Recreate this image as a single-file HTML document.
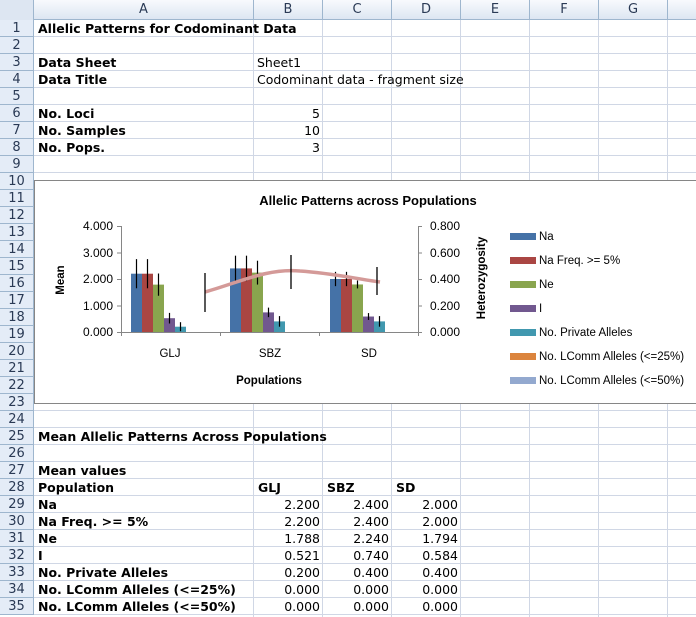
<!DOCTYPE html>
<html><head><meta charset="utf-8"><style>
*{margin:0;padding:0;box-sizing:border-box}
body{width:696px;height:617px;overflow:hidden;background:#fff;position:relative;font-family:"DejaVu Sans",Verdana,sans-serif;font-size:12.5px;color:#000}
.hdr{position:absolute;left:0;top:0;width:696px;height:20px;background:linear-gradient(#f8fafd,#dde6f2);border-bottom:1px solid #9eb6ce}
.ch{position:absolute;top:0;height:20px;line-height:20px;text-align:center;border-right:1px solid #9eb6ce;color:#2a3a55;font-size:13px}
.rh{position:absolute;left:0;width:34px;height:17px;line-height:17px;text-align:center;background:#e4ecf7;border-bottom:1px solid #9eb6ce;border-right:1px solid #9eb6ce;color:#2a3a55;font-size:13px}
.vl{position:absolute;top:20px;width:1px;height:597px;background:#d0d7e5}
.hl{position:absolute;left:34px;width:662px;height:1px;background:#d0d7e5}
.t{position:absolute;height:17px;line-height:17px;white-space:nowrap}
.b{font-weight:bold}
.r{text-align:right}
</style></head><body>
<div class="hdr"></div>
<div class="ch" style="left:0;width:34px;background:#dde6f2"></div>
<div class="ch" style="left:34px;width:220px">A</div>
<div class="ch" style="left:254px;width:69px">B</div>
<div class="ch" style="left:323px;width:69px">C</div>
<div class="ch" style="left:392px;width:69px">D</div>
<div class="ch" style="left:461px;width:69px">E</div>
<div class="ch" style="left:530px;width:69px">F</div>
<div class="ch" style="left:599px;width:69px">G</div>
<div id="grid"></div>
<script>
var g=document.getElementById('grid'),h='';
for(var i=1;i<=35;i++){var y=20+17*(i-1);h+='<div class="rh" style="top:'+y+'px">'+i+'</div><div class="hl" style="top:'+(y+16)+'px"></div>';}
[254,323,392,461,530,599,668].forEach(function(x){h+='<div class="vl" style="left:'+(x-1)+'px"></div>';});
g.innerHTML=h;
</script>
<div style="position:absolute;left:34px;top:20px;width:662px;height:597px">
<div class="t b" style="left:4px;top:0">Allelic Patterns for Codominant Data</div>
<div class="t b" style="left:4px;top:34px">Data Sheet</div>
<div class="t" style="left:223px;top:34px">Sheet1</div>
<div class="t b" style="left:4px;top:51px">Data Title</div>
<div class="t" style="left:223px;top:51px">Codominant data - fragment size</div>
<div class="t b" style="left:4px;top:85px">No. Loci</div>
<div class="t r" style="left:220px;width:66px;top:85px">5</div>
<div class="t b" style="left:4px;top:102px">No. Samples</div>
<div class="t r" style="left:220px;width:66px;top:102px">10</div>
<div class="t b" style="left:4px;top:119px">No. Pops.</div>
<div class="t r" style="left:220px;width:66px;top:119px">3</div>
<div class="t b" style="left:4px;top:408px">Mean Allelic Patterns Across Populations</div>
<div class="t b" style="left:4px;top:442px">Mean values</div>
<div class="t b" style="left:4px;top:459px">Population</div>
<div class="t b" style="left:224px;top:459px">GLJ</div>
<div class="t b" style="left:293px;top:459px">SBZ</div>
<div class="t b" style="left:362px;top:459px">SD</div>
<div id="tbl"></div>
</div>
<script>
var rows=[["Na","2.200","2.400","2.000"],["Na Freq. >= 5%","2.200","2.400","2.000"],["Ne","1.788","2.240","1.794"],["I","0.521","0.740","0.584"],["No. Private Alleles","0.200","0.400","0.400"],["No. LComm Alleles (<=25%)","0.000","0.000","0.000"],["No. LComm Alleles (<=50%)","0.000","0.000","0.000"]];
var s='';rows.forEach(function(r,i){var y=476+17*i;
s+='<div class="t b" style="left:4px;top:'+y+'px">'+r[0].replace(/</g,'&lt;').replace(/>/g,'&gt;')+'</div>';
for(var j=1;j<4;j++)s+='<div class="t r" style="left:'+(220+69*(j-1))+'px;width:66px;top:'+y+'px">'+r[j]+'</div>';});
document.getElementById('tbl').innerHTML=s;
</script>
<svg style="position:absolute;left:0;top:0" width="696" height="617" font-family="Liberation Sans, Arial, sans-serif">
<rect x="34.5" y="180.5" width="670" height="223" fill="#fff" stroke="#868686"/>
<text x="368" y="205" font-size="13" font-weight="bold" text-anchor="middle">Allelic Patterns across Populations</text>
<g font-size="12" text-anchor="end">
<text x="113" y="230">4.000</text><text x="113" y="257">3.000</text><text x="113" y="283">2.000</text><text x="113" y="310">1.000</text><text x="113" y="336">0.000</text>
</g>
<g font-size="12">
<text x="430" y="230">0.800</text><text x="430" y="257">0.600</text><text x="430" y="283">0.400</text><text x="430" y="310">0.200</text><text x="430" y="336">0.000</text>
</g>
<text transform="translate(64,280) rotate(-90)" font-size="11.5" font-weight="bold" text-anchor="middle">Mean</text>
<text transform="translate(485,278) rotate(-90)" font-size="11.5" font-weight="bold" text-anchor="middle">Heterozygosity</text>
<g font-size="11.5" text-anchor="middle"><text x="170" y="357">GLJ</text><text x="270" y="357">SBZ</text><text x="369" y="357">SD</text></g>
<text x="269" y="384" font-size="11.5" font-weight="bold" text-anchor="middle">Populations</text>
<g stroke="#868686" fill="none">
<path d="M121.5 226V333M418.5 226V333M117 226.5h4M117 253h4M117 279.5h4M117 306h4M117 332.5h4M418 226.5h4M418 253h4M418 279.5h4M418 306h4M418 332.5h4M121 332.5h297M220.5 332v4M319.5 332v4M121.5 332v4M418.5 332v4"/>
</g>
<g id="bars"></g>
<path d="M205 292 C240 282 268 268 300 271 C330 273 352 278 380 282" stroke="#d49a98" stroke-width="3.5" fill="none"/>
<g stroke="#000" stroke-width="1.3"><path d="M205 273V312M291 255V289M377 267V295"/></g>
<g font-size="11.5">
<rect x="510" y="233" width="26" height="7" fill="#4572a7"/><text x="539" y="240">Na</text>
<rect x="510" y="257" width="26" height="7" fill="#aa4643"/><text x="539" y="264">Na Freq. &gt;= 5%</text>
<rect x="510" y="281" width="26" height="7" fill="#89a54e"/><text x="539" y="288">Ne</text>
<rect x="510" y="305" width="26" height="7" fill="#71588f"/><text x="539" y="312">I</text>
<rect x="510" y="329" width="26" height="7" fill="#4198af"/><text x="539" y="336">No. Private Alleles</text>
<rect x="510" y="353" width="26" height="7" fill="#db843d"/><text x="539" y="360">No. LComm Alleles (&lt;=25%)</text>
<rect x="510" y="377" width="26" height="7" fill="#93a9cf"/><text x="539" y="384">No. LComm Alleles (&lt;=50%)</text>
</g>
</svg>
<script>
var cols=["#4572a7","#aa4643","#89a54e","#71588f","#4198af"];
var data=[[2.2,2.2,1.788,0.521,0.2],[2.4,2.4,2.24,0.74,0.4],[2,2,1.794,0.584,0.4]];
var err=[[0.55,0.55,0.42,0.2,0.17],[0.48,0.48,0.45,0.18,0.2],[0.27,0.27,0.15,0.13,0.2]];
var xs=[131,230,330],o='';
data.forEach(function(d,g){d.forEach(function(v,i){var x=xs[g]+11*i,h=v*26.5,y=332-h;
o+='<rect x="'+x+'" y="'+y+'" width="11" height="'+h+'" fill="'+cols[i]+'"/>';
var e=err[g][i]*26.5;o+='<line x1="'+(x+5.5)+'" x2="'+(x+5.5)+'" y1="'+(y-e)+'" y2="'+(y+e)+'" stroke="#000" stroke-width="1.2"/>';});});
document.getElementById('bars').innerHTML=o;
</script>
</body></html>
